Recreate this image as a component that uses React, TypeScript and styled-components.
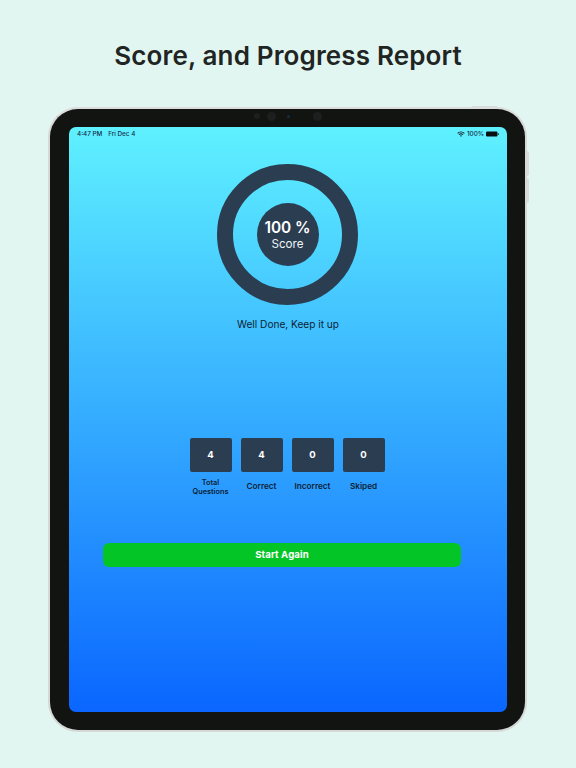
import React from "react";
import styled, { createGlobalStyle } from "styled-components";

const Global = createGlobalStyle`
  html, body { margin: 0; padding: 0; background: #e2f6f1; }
  body { width: 576px; height: 768px; overflow: hidden; font-family: Inter, "Liberation Sans", sans-serif; }
`;

const Page = styled.main`
  width: 576px;
  height: 768px;
  display: flex;
  flex-direction: column;
  align-items: flex-start;
`;

const Title = styled.h1`
  width: 576px;
  height: 107px;
  margin: 0;
  padding-top: 40px;
  box-sizing: border-box;
  text-align: center;
  font: 600 26px/32px Inter, sans-serif;
  letter-spacing: 0.15px;
  color: #1f2523;
`;

const Device = styled.div`
  position: relative;
  margin-left: 48px;
  width: 479px;
  height: 625px;
  box-sizing: border-box;
  padding: 18px 18px 18px 19px;
  background: #121412;
  border: 2px solid #d6d8d8;
  border-top-color: #dcdcdc;
  border-radius: 30px;
`;

const SideButton = styled.span<{ $top: number; $height: number }>`
  position: absolute;
  right: -4px;
  top: ${(p) => p.$top}px;
  width: 2px;
  height: ${(p) => p.$height}px;
  background: #d9dcdb;
  border-radius: 0 2px 2px 0;
`;

const TopButton = styled.span`
  position: absolute;
  top: -3px;
  right: 27px;
  width: 27px;
  height: 2px;
  background: #d9dcdb;
  border-radius: 2px 2px 0 0;
`;

const Lens = styled.span<{ $x: number; $size: number; $color: string }>`
  position: absolute;
  top: ${(p) => 7 - p.$size / 2}px;
  left: ${(p) => p.$x - p.$size / 2}px;
  width: ${(p) => p.$size}px;
  height: ${(p) => p.$size}px;
  border-radius: 50%;
  background: ${(p) => p.$color};
`;

const Screen = styled.div`
  width: 438px;
  height: 585px;
  border-radius: 7px;
  overflow: hidden;
  background: linear-gradient(180deg, #5ff1ff 0%, #0a66ff 100%);
  display: flex;
  flex-direction: column;
  align-items: center;
`;

const StatusBar = styled.div`
  align-self: stretch;
  height: 12px;
  margin-top: 1px;
  padding: 0 8px;
  display: flex;
  align-items: center;
  justify-content: space-between;
  font: 500 6.3px/12px Inter, sans-serif;
  color: #14304a;
`;

const StatusGroup = styled.div<{ $gap: number }>`
  display: flex;
  align-items: center;
  gap: ${(p) => p.$gap}px;
`;

const Ring = styled.div`
  margin: 24px 1px 0 0;
  width: 141px;
  height: 141px;
  box-sizing: border-box;
  border: 16px solid #2b3e51;
  border-radius: 50%;
  display: flex;
  align-items: center;
  justify-content: center;
`;

const ScoreDisc = styled.div`
  width: 62px;
  height: 63px;
  border-radius: 50%;
  background: #2b3e51;
  color: #fff;
  display: flex;
  flex-direction: column;
  align-items: center;
  justify-content: center;
`;

const ScoreValue = styled.div`
  font: 600 15.4px/19px Inter, sans-serif;
`;

const ScoreLabel = styled.div`
  font: 400 11.6px/15px Inter, sans-serif;
  color: #f0f3f5;
`;

const Message = styled.p`
  margin: 12px 0 0;
  font: 400 10.1px/14px Inter, sans-serif;
  color: #0d2236;
`;

const Stats = styled.div`
  margin: 107px 2px 0 0;
  height: 63px;
  display: flex;
  gap: 9px;
`;

const Stat = styled.div`
  width: 42px;
  display: flex;
  flex-direction: column;
  align-items: center;
`;

const StatBox = styled.div`
  width: 42px;
  height: 34px;
  border-radius: 2px;
  background: #2b3e51;
  color: #fff;
  font: 700 9.5px/33px Inter, sans-serif;
  text-align: center;
`;

const StatLabel = styled.div<{ $compact: boolean }>`
  height: 20px;
  margin-top: ${(p) => (p.$compact ? 5 : 4)}px;
  display: flex;
  align-items: center;
  text-align: center;
  white-space: pre-line;
  font: 600 ${(p) => (p.$compact ? 7.3 : 8.2)}px/9px Inter, sans-serif;
  color: #0d2236;
`;

const StartButton = styled.button`
  margin-top: 42px;
  margin-right: 12px;
  width: 358px;
  height: 24px;
  flex: none;
  border: 0;
  border-radius: 6px;
  padding: 0;
  background: #03c526;
  color: #fff;
  font: 700 9.6px/24px Inter, sans-serif;
  letter-spacing: 0.1px;
`;

const stats = [
  { label: "Total\nQuestions", value: 4 },
  { label: "Correct", value: 4 },
  { label: "Incorrect", value: 0 },
  { label: "Skiped", value: 0 },
];

export default function App() {
  return (
    <Page>
      <Global />
      <Title>Score, and Progress Report</Title>
      <Device>
        <TopButton />
        <SideButton $top={42} $height={25} />
        <SideButton $top={69} $height={25} />
        <Lens $x={207} $size={6} $color="#1d1f1e" />
        <Lens $x={221} $size={9} $color="#1d1f1e" />
        <Lens $x={238} $size={3} $color="#123040" />
        <Lens $x={267} $size={9} $color="#1d1f1e" />
        <Screen>
          <StatusBar>
            <StatusGroup $gap={6}>
              <span>4:47 PM</span>
              <span>Fri Dec 4</span>
            </StatusGroup>
            <StatusGroup $gap={2}>
              <svg width="8" height="6" viewBox="0 0 8 6" aria-hidden="true">
                <path d="M0.3 2.1A5.3 5.3 0 0 1 7.7 2.1L7 2.8A4.3 4.3 0 0 0 1 2.8Z" fill="#10161c" />
                <path d="M1.6 3.4A3.4 3.4 0 0 1 6.4 3.4L5.7 4.1A2.4 2.4 0 0 0 2.3 4.1Z" fill="#10161c" />
                <path d="M3 4.7A1.5 1.5 0 0 1 5 4.7L4 5.8Z" fill="#10161c" />
              </svg>
              <span>100%</span>
              <svg width="13" height="6" viewBox="0 0 13 6" aria-hidden="true">
                <rect x="0" y="0.5" width="11.5" height="5" rx="1.2" fill="#0a0f14" />
                <rect x="12" y="2" width="1" height="2" rx="0.5" fill="#2a4a5c" />
              </svg>
            </StatusGroup>
          </StatusBar>
          <Ring>
            <ScoreDisc>
              <ScoreValue>100 %</ScoreValue>
              <ScoreLabel>Score</ScoreLabel>
            </ScoreDisc>
          </Ring>
          <Message>Well Done, Keep it up</Message>
          <Stats>
            {stats.map((s) => (
              <Stat key={s.label}>
                <StatBox>{s.value}</StatBox>
                <StatLabel $compact={s.label.includes("\n")}>{s.label}</StatLabel>
              </Stat>
            ))}
          </Stats>
          <StartButton>Start Again</StartButton>
        </Screen>
      </Device>
    </Page>
  );
}
